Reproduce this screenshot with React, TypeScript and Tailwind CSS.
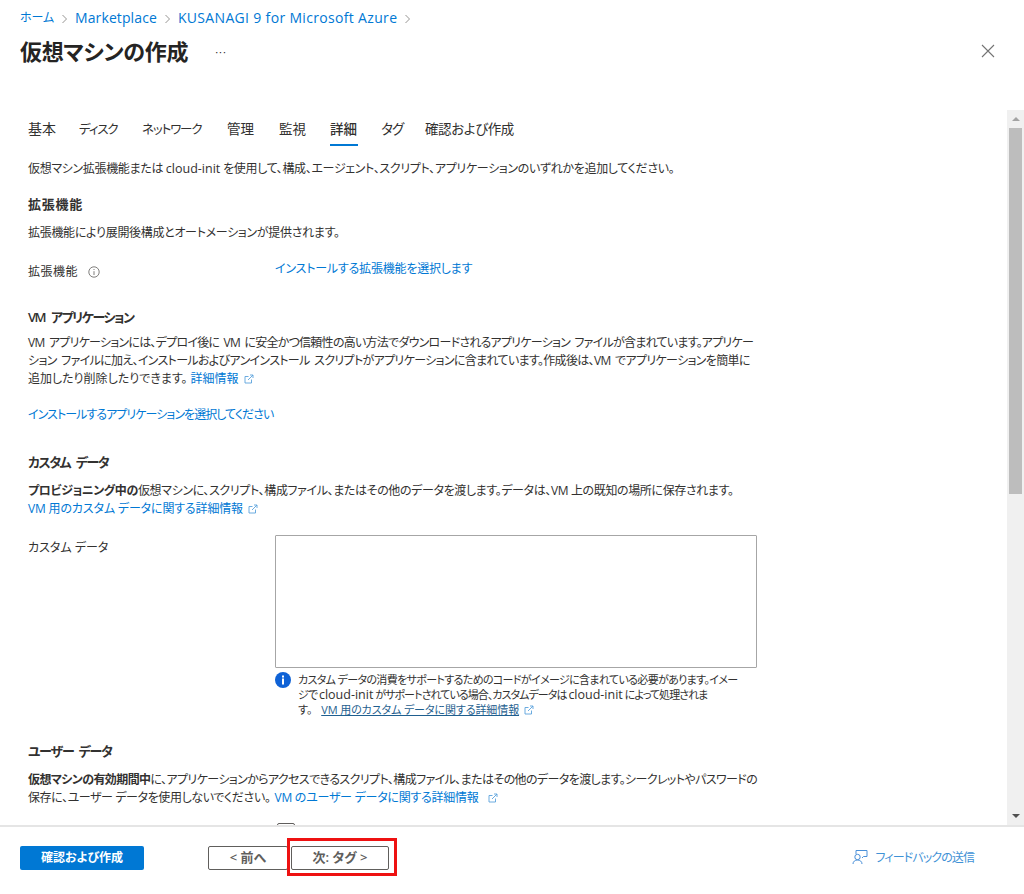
import React from "react";

const FONT = "[font-family:'Open_Sans','Noto_Sans_CJK_JP',sans-serif] [font-feature-settings:'palt']";

function Ext() {
  return (
    <svg width="10" height="10" viewBox="0 0 10 10" fill="none" stroke="#5ba3dc" strokeWidth="0.9" className="inline-block ml-[5px] align-[-1px]">
      <path d="M7.5 5.5V9H1V2.5H4.5" />
      <path d="M4 6L9 1M6 1H9V4" />
    </svg>
  );
}

function Link({ children, className = "" }: { children: React.ReactNode; className?: string }) {
  return <span className={"text-[#0078d4] " + className}>{children}</span>;
}

function Heading({ children, className = "" }: { children: React.ReactNode; className?: string }) {
  return <h2 className={"text-[13px] leading-[18px] font-semibold text-[#323130] " + className}>{children}</h2>;
}

function Latin({ children }: { children: React.ReactNode }) {
  return <span className="text-[12.5px] tracking-normal">{children}</span>;
}

const tabs: [string, string][] = [
  ["基本", "text-[14px] w-[28px]"],
  ["ディスク", "text-[12.5px] tracking-[-1.1px] w-[40px] pt-[1px]"],
  ["ネットワーク", "text-[12.5px] tracking-[-1.1px] w-[62px] pt-[1px]"],
  ["管理", "w-[29px]"],
  ["監視", "w-[28px]"],
  ["詳細", "font-medium w-[28px]"],
  ["タグ", "tracking-[-0.8px] w-[21px]"],
  ["確認および作成", "tracking-[-0.4px] w-[89px]"],
];

export default function App() {
  return (
    <div className={"w-[1024px] h-[894px] bg-white flex flex-col overflow-hidden relative text-[#323130] " + FONT}>
      <header className="h-[110px] shrink-0 pl-5 pr-[29px] pt-[10px] flex flex-col">
        <nav className="flex items-center text-[14px] leading-4 text-[#0078d4] h-4 whitespace-nowrap">
          <span className="text-[12px] tracking-[-0.1px]">ホーム</span>
          <Chevron />
          <span className="tracking-[0.1px]">Marketplace</span>
          <Chevron />
          <span className="tracking-[0.33px]">KUSANAGI 9 for Microsoft Azure</span>
          <Chevron />
        </nav>
        <div className="flex items-center mt-[10px] h-[30px]">
          <h1 className="text-[22px] tracking-[-0.3px] leading-[30px] font-semibold text-[#252423]">仮想マシンの作成</h1>
          <span className="ml-[27px] text-[11px] tracking-[1px] text-[#323130] leading-none">···</span>
          <svg width="14" height="14" viewBox="0 0 14 14" stroke="#737373" strokeWidth="1.1" className="ml-auto">
            <path d="M1 1L13 13M13 1L1 13" />
          </svg>
        </div>
      </header>

      <div className="flex-1 min-h-0 flex">
        <main className="flex-1 min-w-0 overflow-hidden pl-7 text-[12px] leading-[18px] whitespace-nowrap">
          <div className="flex items-start gap-[23px] h-[37px] pt-[10px] text-[13.5px] leading-[18px] text-[#323130]">
            {tabs.map(([t, c]) => (
              <div key={t} className={"relative " + c}>
                <span>{t}</span>
                {t === "詳細" && <div className="absolute left-0 right-0 top-[24px] h-[2px] bg-[#0078d4]" />}
              </div>
            ))}
          </div>

          <p className="mt-[13px] tracking-[-0.33px]">仮想マシン拡張機能または <Latin>cloud-init</Latin> を使用して、構成、エージェント、スクリプト、アプリケーションのいずれかを追加してください。</p>

          <Heading className="mt-[17px] tracking-[0.75px]">拡張機能</Heading>
          <p className="mt-[11px] tracking-[-0.3px]">拡張機能により展開後構成とオートメーションが提供されます。</p>

          <div className="flex mt-[18px] h-[18px]">
            <div className="w-[247px] flex items-center pt-[6px]">
              <span className="tracking-[0.5px]">拡張機能</span>
              <svg width="12" height="12" viewBox="0 0 12 12" fill="none" stroke="#605e5c" strokeWidth="0.8" className="ml-[10px]">
                <circle cx="6" cy="6" r="5.2" />
                <path d="M6 5.2V9M6 3V4" />
              </svg>
            </div>
            <Link className="tracking-[-0.2px]">インストールする拡張機能を選択します</Link>
          </div>

          <Heading className="mt-[30px] tracking-[-1.5px] [word-spacing:4px]">VM アプリケーション</Heading>
          <p className="mt-[8px]">
            <span className="tracking-[-0.75px] [word-spacing:2px]">VM アプリケーションには、デプロイ後に VM に安全かつ信頼性の高い方法でダウンロードされるアプリケーション ファイルが含まれています。アプリケー</span><br />
            <span className="tracking-[-0.66px] [word-spacing:2px]">ション ファイルに加え、インストールおよびアンインストール スクリプトがアプリケーションに含まれています。作成後は、VM でアプリケーションを簡単に</span><br />
            追加したり削除したりできます。 <Link>詳細情報</Link><Ext />
          </p>
          <p className="mt-[18px]"><Link className="tracking-[-0.95px]">インストールするアプリケーションを選択してください</Link></p>

          <Heading className="mt-[29px] tracking-[-1.5px] [word-spacing:4px]">カスタム データ</Heading>
          <p className="mt-[11px]">
            <span className="tracking-[-0.37px]"><span className="font-semibold">プロビジョニング中の</span>仮想マシンに、スクリプト、構成ファイル、またはその他のデータを渡します。データは、VM 上の既知の場所に保存されます。</span><br />
            <Link className="tracking-[-0.15px]">VM 用のカスタム データに関する詳細情報</Link><Ext />
          </p>

          <div className="flex mt-[17px]">
            <div className="w-[247px] pt-[4px]">カスタム データ</div>
            <div className="w-[482px]">
              <div className="h-[133px] border border-[#a6a6a6] rounded-[1px]" />
              <div className="flex mt-[4px]">
                <svg width="16" height="16" viewBox="0 0 16 16" className="shrink-0">
                  <circle cx="8" cy="8" r="8" fill="#0f62d6" />
                  <rect x="7" y="6.5" width="2" height="6" fill="#fff" />
                  <rect x="7" y="3.5" width="2" height="2" fill="#fff" />
                </svg>
                <p className="ml-[7px] text-[11px] leading-[15px]">
                  <span className="tracking-[-0.65px]">カスタム データの消費をサポートするためのコードがイメージに含まれている必要があります。イメー</span><br />
                  <span className="tracking-[-0.95px]">ジで <Latin>cloud-init</Latin> がサポートされている場合、カスタムデータは <Latin>cloud-init</Latin> によって処理されま</span><br />
                  す。 <span className="underline text-[#1f5f8f] tracking-[-0.1px] ml-[6px]">VM 用のカスタム データに関する詳細情報</span><Ext />
                </p>
              </div>
            </div>
          </div>

          <Heading className="mt-[25px] tracking-[-1.2px] [word-spacing:3px]">ユーザー データ</Heading>
          <p className="mt-[11px]">
            <span className="tracking-[-0.6px]"><span className="font-semibold">仮想マシンの有効期間中</span>に、アプリケーションからアクセスできるスクリプト、構成ファイル、またはその他のデータを渡します。シークレットやパスワードの</span><br />
            <span className="tracking-[-0.4px]">保存に、ユーザー データを使用しないでください。</span> <Link className="tracking-[-0.25px] ml-[1px]">VM のユーザー データに関する詳細情報</Link><span className="ml-[4px]"><Ext /></span>
          </p>
          <div className="ml-[249px] mt-[16px] w-[18px] h-[18px] border border-[#605e5c] rounded-[2px]" />
        </main>

        <div className="w-[17px] shrink-0 bg-[#f0f0f0] flex flex-col items-center">
          <div className="h-[18px] flex items-center justify-center">
            <div className="w-0 h-0 border-x-[4px] border-x-transparent border-b-[4px] border-b-[#a3a3a3]" />
          </div>
          <div className="w-[13px] h-[366px] bg-[#bdbdbd]" />
          <div className="mt-auto h-[18px] flex items-center justify-center">
            <div className="w-0 h-0 border-x-[4px] border-x-transparent border-t-[4px] border-t-[#505050]" />
          </div>
        </div>
      </div>

      <footer className="h-[69px] shrink-0 border-t-2 border-[#e5e5e5] bg-white flex items-start pt-[19px] pl-5 relative z-10">
        <button className="w-[124px] h-6 bg-[#0078d4] rounded-[2px] text-white text-[12px] font-semibold">確認および作成</button>
        <button className="ml-[64px] w-[80px] h-6 border border-[#605e5c] rounded-[2px] text-[#605e5c] text-[13px] font-semibold">&lt; 前へ</button>
        <button className="w-[98px] ml-[3px] h-6 border border-[#605e5c] rounded-[2px] text-[#605e5c] text-[13px] font-semibold">次: タグ &gt;</button>
        <div className="ml-auto mr-[50px] flex items-center text-[#3f92d6] text-[12px] h-6">
          <svg width="16" height="16" viewBox="0 0 16 16" fill="none" stroke="#4a90d9" strokeWidth="1" className="mr-[8px] mb-[2px]">
            <path d="M4 5V1.5H15V7.5H11.5L10 9" />
            <circle cx="5.5" cy="8" r="2.7" />
            <path d="M1 15C1 12.5 3 11 5.5 11S10 12.5 10 15" />
          </svg>
          <span className="tracking-[-0.9px]">フィードバックの送信</span>
        </div>
      </footer>

      <div className="absolute left-[287px] top-[838px] w-[110px] h-[38px] border-[3px] border-[#ee1111] z-20 pointer-events-none" />
    </div>
  );
}

function Chevron() {
  return (
    <svg width="7" height="10" viewBox="0 0 7 10" fill="none" stroke="#8a8886" strokeWidth="0.9" className="mx-[7px] mt-[1px]">
      <path d="M1.5 1L5.5 5L1.5 9" />
    </svg>
  );
}
